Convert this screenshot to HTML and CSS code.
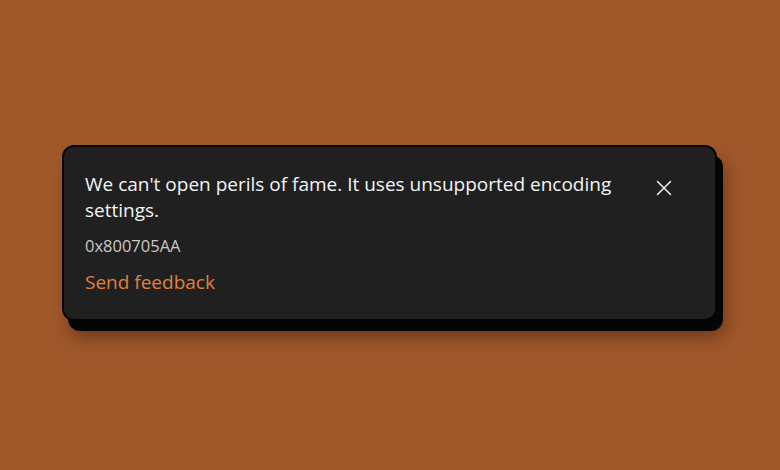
FILE: index.html
```html
<!DOCTYPE html>
<html>
<head>
<meta charset="utf-8">
<link rel="stylesheet" href="styles.css">
</head>
<body>
<div class="stage">
  <div class="card">
    <div class="content">
      <p class="message">We can't open perils of fame. It uses unsupported encoding settings.</p>
      <p class="code">0x800705AA</p>
      <a class="link" href="#">Send feedback</a>
    </div>
    <button class="close" aria-label="Close">
      <svg width="16" height="16" viewBox="0 0 16 16"><path d="M1.5 1.5 L14.5 14.5 M14.5 1.5 L1.5 14.5" stroke="#e8e8e8" stroke-width="1.6" stroke-linecap="round" fill="none"/></svg>
    </button>
  </div>
</div>
</body>
</html>
```
FILE: styles.css
```css
html, body {
  margin: 0;
  padding: 0;
  width: 780px;
  height: 470px;
  background: #a0582b;
  overflow: hidden;
}
.stage {
  padding: 145px 0 0 62px;
}
.card {
  box-sizing: border-box;
  width: 655px;
  height: 176px;
  background: #202020;
  border: 2px solid #050505;
  border-radius: 12px;
  box-shadow: 6px 10px 0 #050505, 8px 16px 18px rgba(40, 15, 0, 0.45);
  display: flex;
  justify-content: space-between;
  padding: 24px 42px 0 21px;
  font-family: "Open Sans", sans-serif;
}
.content {
  width: 545px;
}
.message {
  margin: 0;
  color: #f4f4f4;
  font-size: 19px;
  line-height: 26px;
}
.code {
  margin: 13px 0 0;
  color: #c9c9c9;
  font-size: 16.5px;
  line-height: 20px;
}
.link {
  display: inline-block;
  margin-top: 14px;
  color: #e2803c;
  font-size: 19px;
  line-height: 24px;
  text-decoration: none;
}
.close {
  background: none;
  border: none;
  padding: 0;
  margin-top: 8px;
  width: 18px;
  height: 18px;
  display: flex;
  align-items: center;
  justify-content: center;
}
```
